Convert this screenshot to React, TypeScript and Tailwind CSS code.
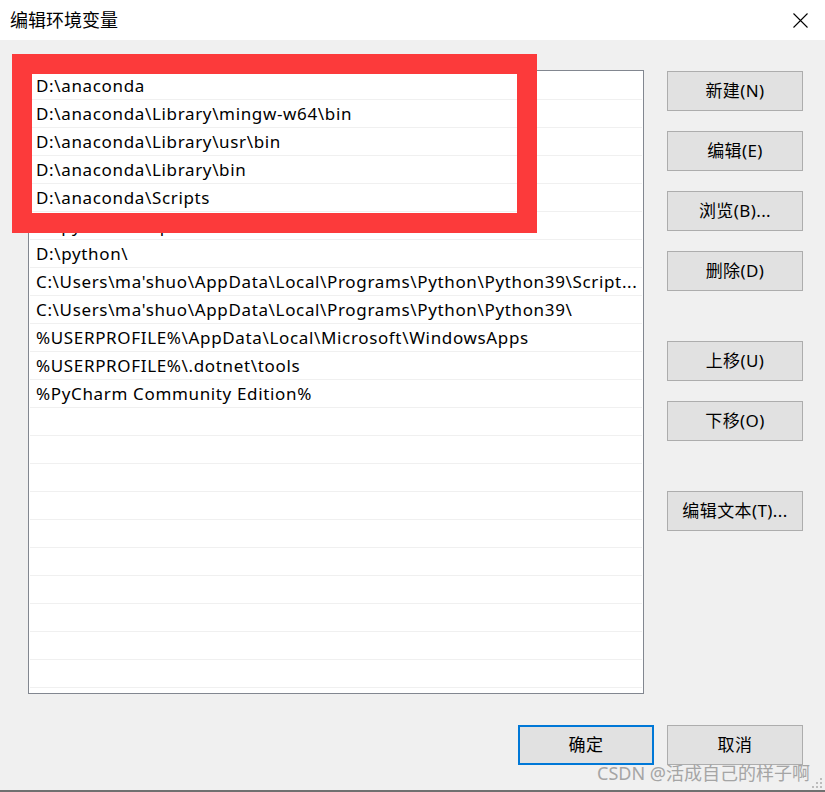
const paths = [
  "D:\\anaconda",
  "D:\\anaconda\\Library\\mingw-w64\\bin",
  "D:\\anaconda\\Library\\usr\\bin",
  "D:\\anaconda\\Library\\bin",
  "D:\\anaconda\\Scripts",
  "D:\\python\\Scripts\\",
  "D:\\python\\",
  "C:\\Users\\ma'shuo\\AppData\\Local\\Programs\\Python\\Python39\\Script...",
  "C:\\Users\\ma'shuo\\AppData\\Local\\Programs\\Python\\Python39\\",
  "%USERPROFILE%\\AppData\\Local\\Microsoft\\WindowsApps",
  "%USERPROFILE%\\.dotnet\\tools",
  "%PyCharm Community Edition%",
]

const rows = [...paths, ...Array(11).fill("")]

function Btn({ label, primary }: { label: string; primary?: boolean }) {
  return (
    <button
      className={
        primary
          ? "w-[136px] h-[40px] bg-[#e1e1e1] border-2 border-[#0078d7] text-[17px] tracking-[0.4px] text-black"
          : "w-[136px] h-[40px] bg-[#e1e1e1] border border-[#adadad] text-[17px] tracking-[0.4px] text-black"
      }
    >
      {label}
    </button>
  )
}

export default function App() {
  return (
    <div
      className="relative w-[825px] h-[792px] overflow-hidden bg-white"
      style={{ fontFamily: "'Noto Sans', 'Noto Sans CJK SC', sans-serif" }}
    >
      {/* title bar */}
      <div className="h-[40px] flex items-center justify-between bg-white pl-[10px] pr-[17px]">
        <span className="text-[18px] text-black">编辑环境变量</span>
        <svg width="15" height="15" viewBox="0 0 15 15">
          <path d="M0.5 0.5 L14.5 14.5 M14.5 0.5 L0.5 14.5" stroke="#000" strokeWidth="1.1" />
        </svg>
      </div>

      <div className="h-[750px] bg-[#f0f0f0] flex flex-col">
        <div className="flex pt-[30px] pl-[28px] gap-[23px]">
          {/* list */}
          <div className="w-[616px] h-[624px] border border-[#828790] bg-white overflow-hidden pt-[1px] px-[1px]">
            {rows.map((r, i) => (
              <div
                key={i}
                className="h-[28px] border-b border-[#f0f0f0] pl-[6px] text-[17px] leading-[27px] tracking-[0.65px] text-black whitespace-nowrap overflow-hidden"
              >
                {r}
              </div>
            ))}
          </div>

          {/* side buttons */}
          <div className="flex flex-col pt-[1px]">
            <div className="flex flex-col gap-[20px]">
              <Btn label="新建(N)" />
              <Btn label="编辑(E)" />
              <Btn label="浏览(B)..." />
              <Btn label="删除(D)" />
            </div>
            <div className="flex flex-col gap-[20px] mt-[50px]">
              <Btn label="上移(U)" />
              <Btn label="下移(O)" />
            </div>
            <div className="mt-[50px]">
              <Btn label="编辑文本(T)..." />
            </div>
          </div>
        </div>

        <div className="flex justify-end gap-[13px] pr-[22px] mt-[31px]">
          <Btn label="确定" primary />
          <Btn label="取消" />
        </div>
      </div>
      <div className="h-[2px] bg-[#707070]" />

      {/* red annotation box */}
      <div className="absolute left-[12px] top-[54px] w-[525px] h-[179px] border-[20px] border-[#fc3a3b]" />

      {/* watermark */}
      <div className="absolute right-[15px] top-[763px] text-[18px] leading-[20px] text-[#a5a5a5] whitespace-nowrap">
        CSDN @活成自己的样子啊
      </div>

      {/* resize grip */}
      <svg className="absolute right-[3px] bottom-[4px]" width="10" height="10" viewBox="0 0 10 10">
        <rect x="8" y="0" width="2" height="2" fill="#bcbcbc" />
        <rect x="4" y="4" width="2" height="2" fill="#bcbcbc" />
        <rect x="8" y="4" width="2" height="2" fill="#bcbcbc" />
        <rect x="0" y="8" width="2" height="2" fill="#bcbcbc" />
        <rect x="4" y="8" width="2" height="2" fill="#bcbcbc" />
        <rect x="8" y="8" width="2" height="2" fill="#bcbcbc" />
      </svg>
    </div>
  )
}
